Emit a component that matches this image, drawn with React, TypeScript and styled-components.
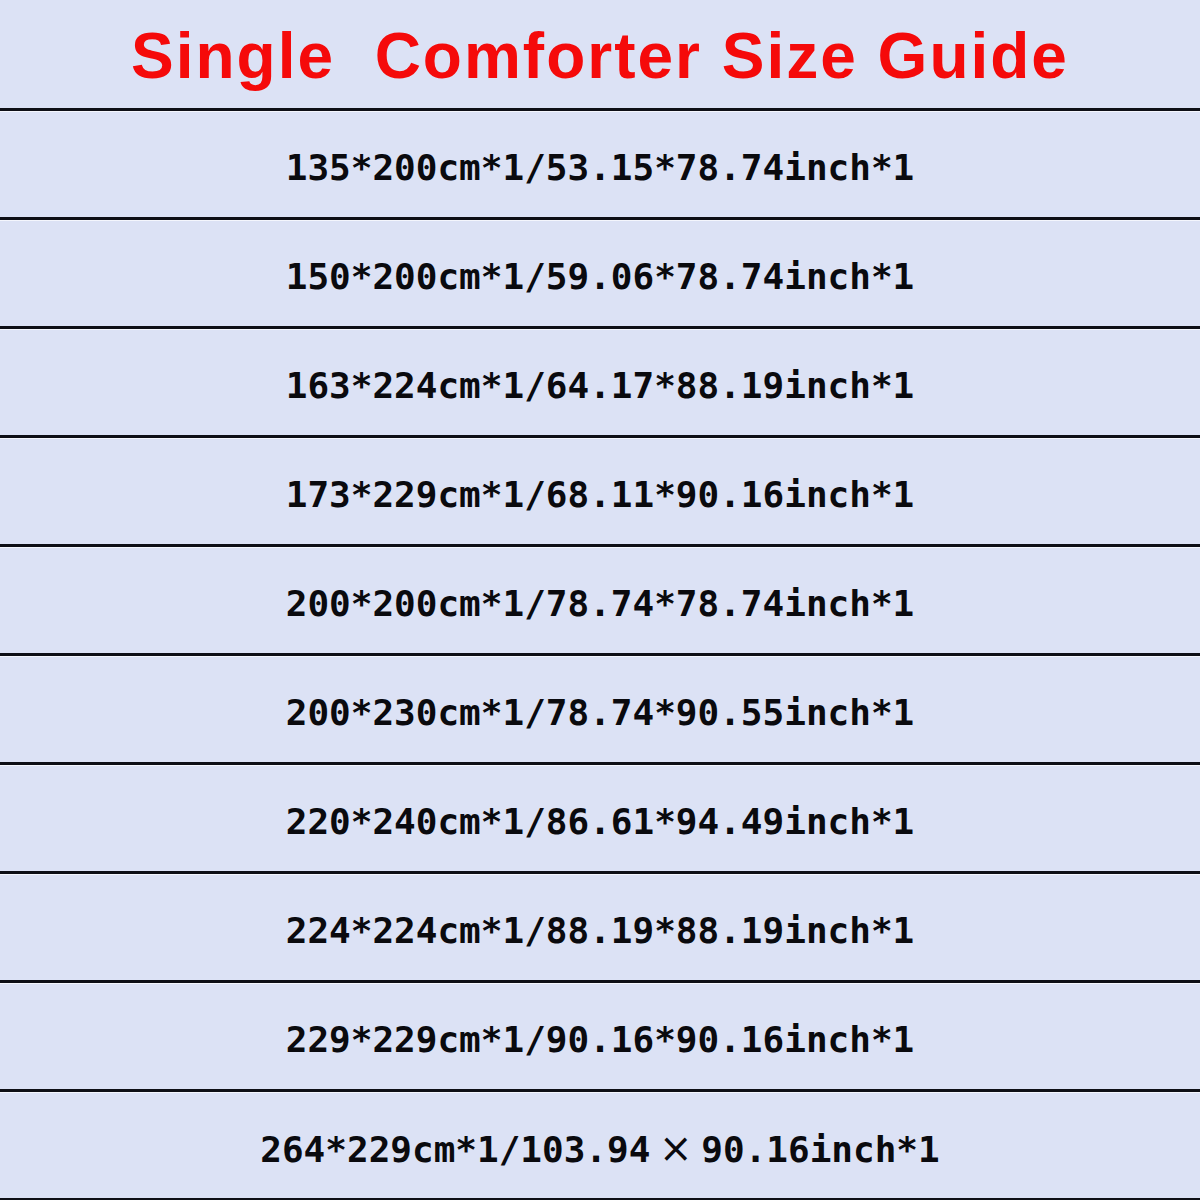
import { createGlobalStyle } from 'styled-components'
import styled from 'styled-components'

const GlobalStyle = createGlobalStyle`
  html, body {
    margin: 0;
    padding: 0;
    background: #dce2f5;
  }
`

const Sheet = styled.main`
  width: 1200px;
  height: 1200px;
  display: flex;
  flex-direction: column;
  background: #dce2f5;
  overflow: hidden;
`

const Band = styled.div<{ $tall?: boolean }>`
  height: ${(p) => (p.$tall ? '108px' : '106px')};
  flex: none;
  display: flex;
  align-items: center;
  justify-content: center;
  border-bottom: 3px solid #0e0f16;
  box-shadow: 0 1px 0 #f4f6fd;
`

const Title = styled.h1`
  margin: 0;
  padding-top: 4px;
  font-family: 'Liberation Sans', Arial, sans-serif;
  font-weight: 700;
  font-size: 64px;
  letter-spacing: 2px;
  color: #f50a0a;
  white-space: pre;
`

const Size = styled.p`
  margin: 0;
  padding-top: 6px;
  font-family: 'DejaVu Sans Mono', monospace;
  font-weight: 700;
  font-size: 36px;
  color: #0a0a0e;
  white-space: pre;
`

const Wide = styled.span`
  display: inline-block;
  width: 2ch;
  text-align: center;
  font-family: 'DejaVu Sans', sans-serif;
  font-weight: 400;
  font-size: 40px;
`

const sizes = [
  '135*200cm*1/53.15*78.74inch*1',
  '150*200cm*1/59.06*78.74inch*1',
  '163*224cm*1/64.17*88.19inch*1',
  '173*229cm*1/68.11*90.16inch*1',
  '200*200cm*1/78.74*78.74inch*1',
  '200*230cm*1/78.74*90.55inch*1',
  '220*240cm*1/86.61*94.49inch*1',
  '224*224cm*1/88.19*88.19inch*1',
  '229*229cm*1/90.16*90.16inch*1',
]

export default function App() {
  return (
    <>
      <GlobalStyle />
      <Sheet>
        <Band $tall>
          <Title>{'Single  Comforter Size Guide'}</Title>
        </Band>
        {sizes.map((s) => (
          <Band key={s}>
            <Size>{s}</Size>
          </Band>
        ))}
        <Band>
          <Size>
            264*229cm*1/103.94<Wide>×</Wide>90.16inch*1
          </Size>
        </Band>
      </Sheet>
    </>
  )
}
